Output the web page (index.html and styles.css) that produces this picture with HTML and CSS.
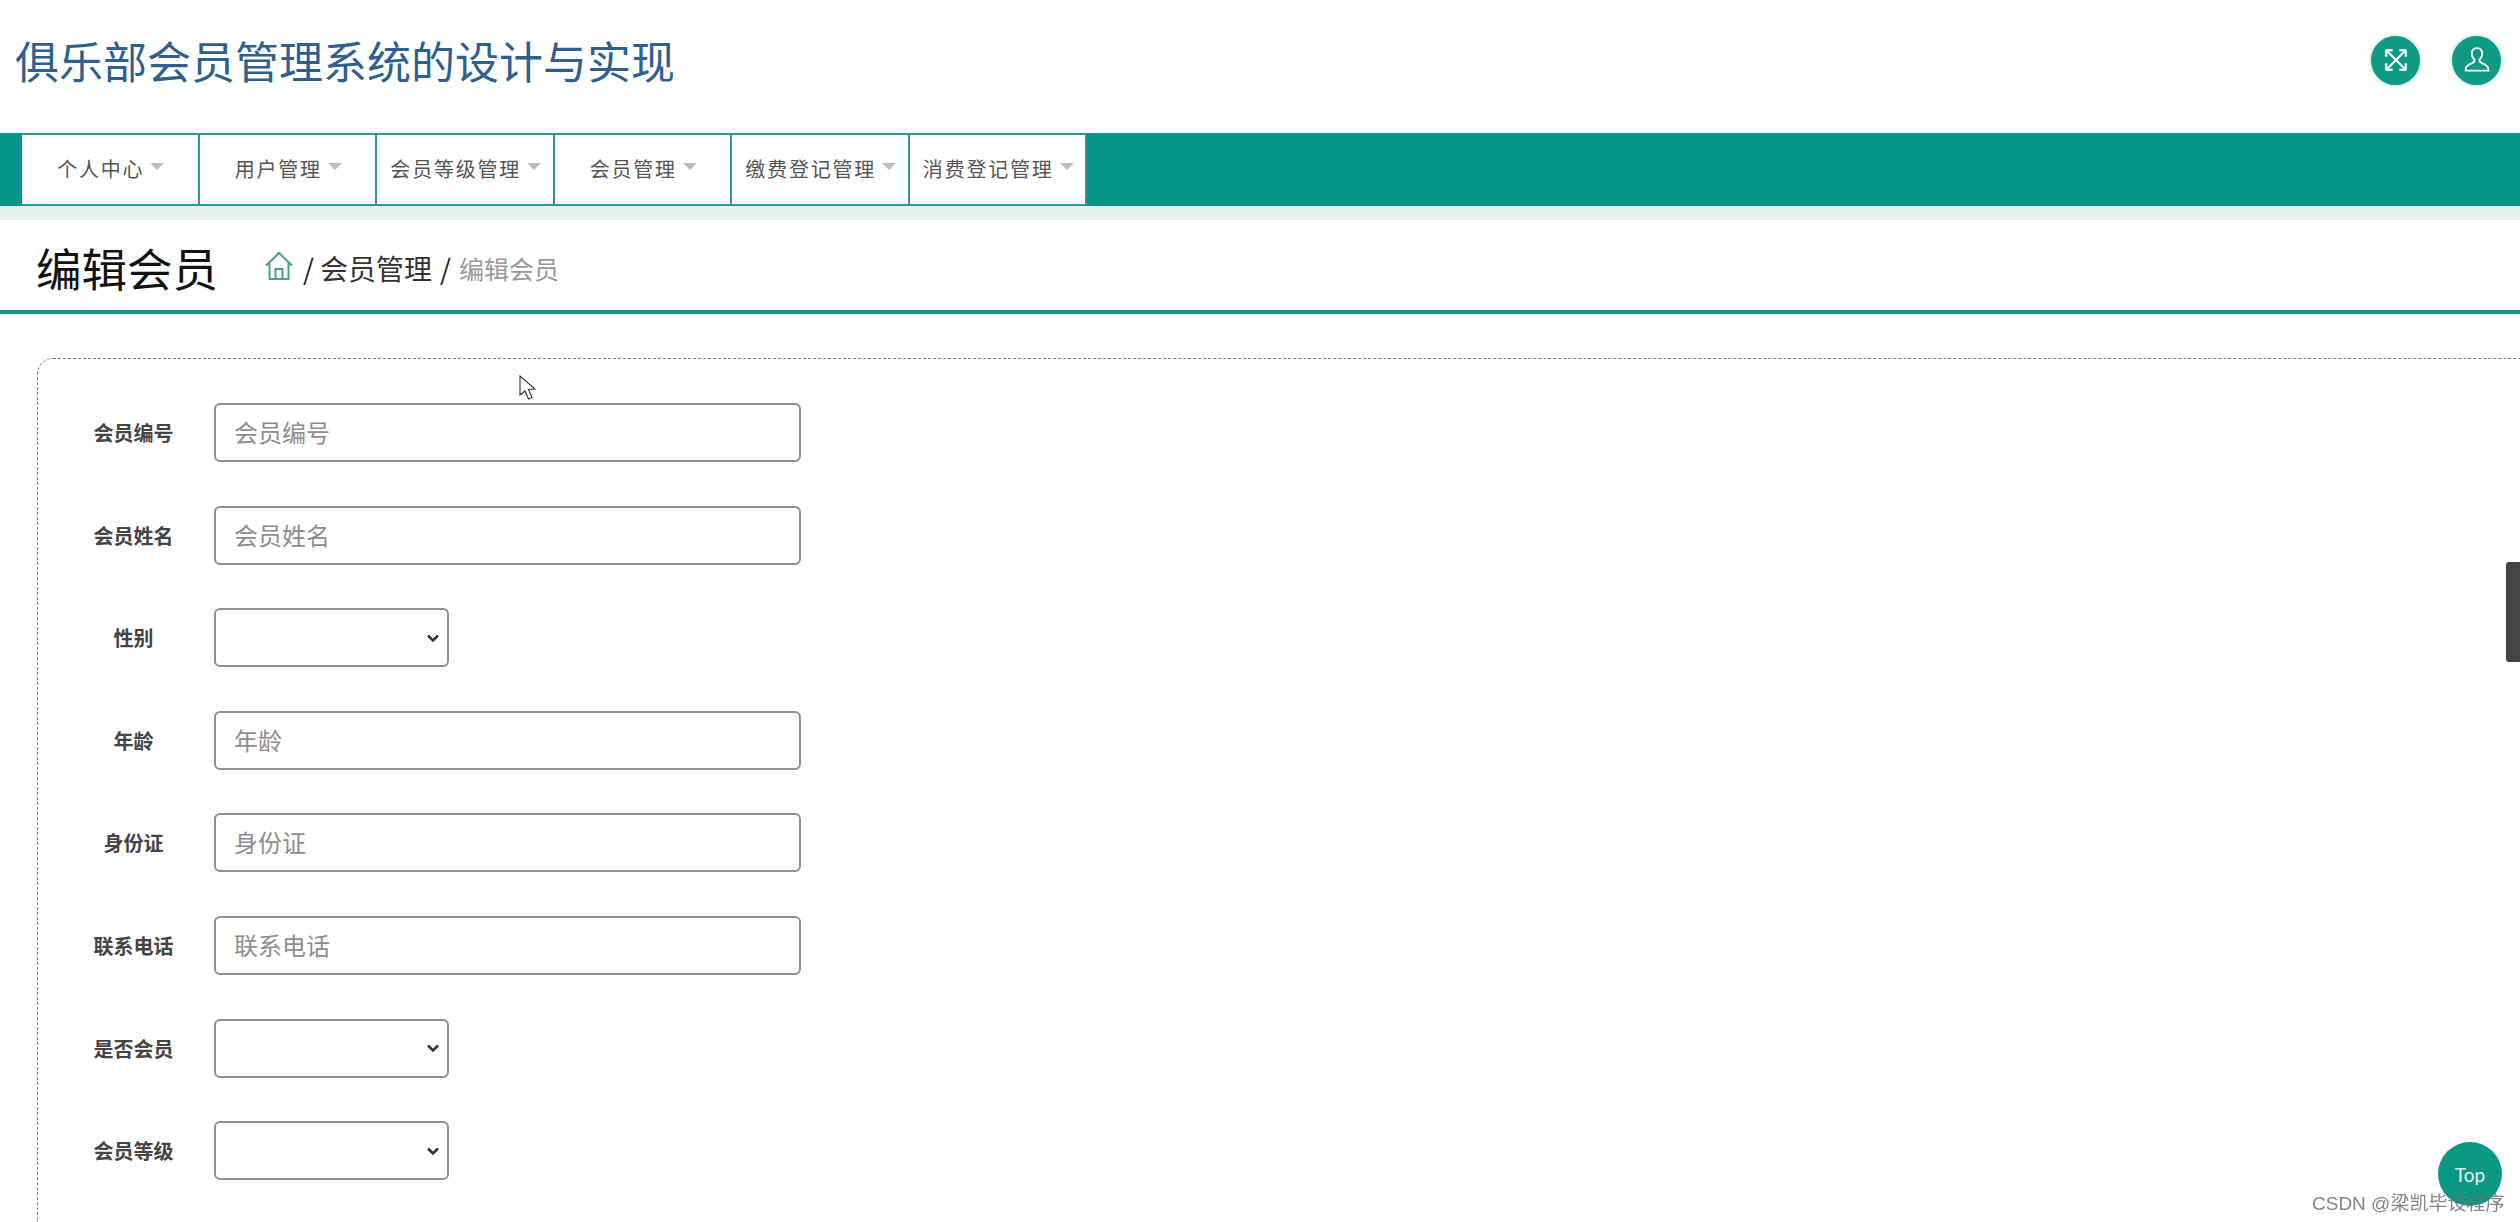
FILE: index.html
```html
<!DOCTYPE html>
<html lang="zh-CN">
<head>
<meta charset="utf-8">
<title>编辑会员</title>
<link rel="stylesheet" href="styles.css">
</head>
<body>
<header class="top">
  <h1 class="brand">俱乐部会员管理系统的设计与实现</h1>
  <div class="tools">
    <span class="tool">
      <svg viewBox="0 0 24 24" width="26" height="26" fill="none" stroke="#fff" stroke-width="1.9"><path d="M4 4l16 16M20 4L4 20"/><path d="M3 9V3h6M15 3h6v6M21 15v6h-6M9 21H3v-6"/></svg>
    </span>
    <span class="tool">
      <svg viewBox="0 0 24 24" width="30" height="30" fill="none" stroke="#fff" stroke-width="1.500" stroke-linejoin="round"><path d="M12 2.500c-2.900 0-4.400 2-4.200 4.600.1 1.900.9 3.400 1.900 4.400.4.500.4 1.600-.2 2.100-1.200 1-5.500 2.200-6.300 4.400-.3.900-.3 2.500-.3 2.500h18.200s0-1.600-.3-2.500c-.8-2.200-5.100-3.400-6.300-4.400-.6-.5-.6-1.600-.2-2.100 1-1 1.800-2.500 1.900-4.400.2-2.600-1.300-4.600-4.200-4.600z"/></svg>
    </span>
  </div>
</header>

<nav class="nav">
  <a class="nav-item">个人中心<i class="caret"></i></a>
  <a class="nav-item">用户管理<i class="caret"></i></a>
  <a class="nav-item">会员等级管理<i class="caret"></i></a>
  <a class="nav-item">会员管理<i class="caret"></i></a>
  <a class="nav-item">缴费登记管理<i class="caret"></i></a>
  <a class="nav-item">消费登记管理<i class="caret"></i></a>
</nav>
<div class="subbar"></div>

<section class="page-head">
  <h2 class="page-title">编辑会员</h2>
  <div class="crumbs">
    <svg class="home" viewBox="0 0 30 30" width="30" height="30" fill="none" stroke="#4c9f8e" stroke-width="2"><path d="M2 14.500L15 2l13 12.500"/><path d="M5.500 12v16h19V12"/><path d="M11.500 28V18h7v10"/></svg>
    <span class="sep">/</span>
    <span class="crumb">会员管理</span>
    <span class="sep">/</span>
    <span class="crumb-current">编辑会员</span>
  </div>
</section>

<form class="panel">
  <div class="row"><label class="label">会员编号</label><input class="field" placeholder="会员编号"></div>
  <div class="row"><label class="label">会员姓名</label><input class="field" placeholder="会员姓名"></div>
  <div class="row"><label class="label">性别</label><select class="pick"></select></div>
  <div class="row"><label class="label">年龄</label><input class="field" placeholder="年龄"></div>
  <div class="row"><label class="label">身份证</label><input class="field" placeholder="身份证"></div>
  <div class="row"><label class="label">联系电话</label><input class="field" placeholder="联系电话"></div>
  <div class="row"><label class="label">是否会员</label><select class="pick"></select></div>
  <div class="row"><label class="label">会员等级</label><select class="pick"></select></div>
</form>

<svg class="cursor" viewBox="0 0 18 26" width="18" height="26" fill="#fff" stroke="#333" stroke-width="1.100"><path d="M1 1v19l5-4 3.500 8 3.500-1.500-3.500-8 6.500-.5z"/></svg>
<div class="side-tab"></div>
<a class="to-top">Top</a>
<div class="watermark">CSDN @梁凯毕设程序</div>
</body>
</html>
```
FILE: styles.css
```css
* { box-sizing: border-box; }
html, body { height: 100%; }
body {
  margin: 0;
  overflow: hidden;
  background: #fff;
  color: #333;
  font-family: "Noto Sans CJK SC", "Liberation Sans", sans-serif;
}
.top {
  height: 133px;
  display: flex;
  align-items: center;
  justify-content: space-between;
  padding: 0 19px 13px 15px;
}
.brand {
  margin: 0;
  font-size: 44px;
  font-weight: 400;
  line-height: 1;
  color: #2f5f8e;
}
.tools { display: flex; gap: 32px; }
.tool {
  width: 49px;
  height: 49px;
  border-radius: 50%;
  background: #0f9a84;
  box-shadow: 0 0 5px rgba(15, 154, 132, .35);
  display: flex;
  align-items: center;
  justify-content: center;
}
.nav {
  height: 73px;
  padding-left: 22px;
  background: #03958a;
  display: flex;
}
.nav-item {
  width: 177.500px;
  padding: 0 0 2px 2px;
  background: #fff;
  border: 2px solid #2f9a91;
  border-left-width: 0;
  display: flex;
  align-items: center;
  justify-content: center;
  gap: 6px;
  font-size: 20px;
  letter-spacing: 1.800px;
  color: #555;
}
.caret {
  width: 0;
  height: 0;
  border-left: 7px solid transparent;
  border-right: 7px solid transparent;
  border-top: 7px solid #bdbdbd;
  margin-bottom: 5px;
}
.subbar { height: 14px; background: #e6f1ec; }
.page-head {
  height: 94px;
  padding: 6px 0 0 36px;
  display: flex;
  align-items: center;
  border-bottom: 4px solid #12978a;
}
.page-title {
  margin: 0;
  width: 228px;
  font-size: 45.500px;
  font-weight: 400;
  line-height: 1;
  color: #111;
}
.crumbs { display: flex; align-items: center; gap: 8px; }
.home { margin-right: 1px; margin-bottom: 4px; }
.sep { font-size: 28px; color: #222; }
.crumb { font-size: 28px; color: #333; margin-left: -2px; }
.crumb-current { font-size: 25px; color: #999; }
.panel {
  margin: 44px 0 0 37px;
  padding: 44px 0 0 15px;
  border: 2px dashed #7d7d7d;
  border-width: 1.500px 0 0 1.500px;
  border-radius: 16px 0 0 0;
  height: 864px;
  overflow: hidden;
  display: flex;
  flex-direction: column;
  gap: 43.600px;
}
.row { display: flex; flex: none; align-items: center; height: 59px; }
.label {
  width: 161px;
  text-align: center;
  font-size: 20px;
  font-weight: 700;
  color: #444;
}
.field, .pick {
  height: 59px;
  padding: 0 18px 2px;
  background: #fff;
  border: 2px solid #8f8f8f;
  border-radius: 6px;
  font-family: inherit;
  font-size: 24px;
}
.field { width: 587px; }
.field::placeholder { color: #8d8d8d; opacity: 1; }
.pick {
  width: 235px;
  appearance: none;
  background: #fff url("data:image/svg+xml,%3Csvg xmlns='http://www.w3.org/2000/svg' viewBox='0 0 14 10'%3E%3Cpath d='M2 2.500l5 5 5-5' fill='none' stroke='%23333' stroke-width='2.500'/%3E%3C/svg%3E") no-repeat right 7px center / 14px 10px;
}
.cursor { position: fixed; left: 519px; top: 375px; }
.side-tab {
  position: fixed;
  right: 0;
  top: 562px;
  width: 14px;
  height: 100px;
  background: #444;
  border-radius: 3px 0 0 3px;
}
.to-top {
  position: fixed;
  left: 2438px;
  top: 1142px;
  width: 64px;
  height: 64px;
  border-radius: 50%;
  background: #0a9884;
  color: #e8f6f3;
  font-family: "Lato", sans-serif;
  font-size: 19px;
  display: flex;
  align-items: center;
  justify-content: center;
}
.watermark {
  position: fixed;
  left: 2312px;
  top: 1190px;
  font-family: "Liberation Sans", "Noto Sans CJK SC", sans-serif;
  font-size: 19px;
  line-height: 28px;
  white-space: nowrap;
  color: rgba(110, 110, 110, .85);
}
```
